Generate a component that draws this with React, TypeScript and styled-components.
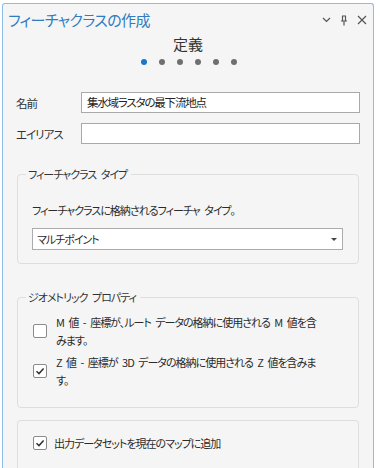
import React from "react";
import styled, { createGlobalStyle, css } from "styled-components";

const GlobalStyle = createGlobalStyle`
  html, body { margin: 0; padding: 0; background: #ffffff; }
  body {
    font-family: "Noto Sans CJK JP", "Noto Sans", sans-serif;
    font-feature-settings: "palt";
    color: #2b2b2b;
  }
  * { box-sizing: border-box; }
`;

const bodyText = css`
  font-size: 11px;
  letter-spacing: -1px;
  word-spacing: 3px;
  color: #2b2b2b;
`;

const Page = styled.div`
  width: 380px;
  height: 468px;
  padding: 3px 0 0 2px;
  overflow: hidden;
`;

const Panel = styled.div`
  width: 372px;
  height: 480px;
  background: #f5f5f5;
  border: 1px solid #8dbde6;
  border-bottom: none;
  border-radius: 3px 3px 0 0;
  display: flex;
  flex-direction: column;
  & > * { flex: none; }
`;

const Header = styled.div`
  height: 32px;
  display: flex;
  align-items: center;
  padding: 0 2px 0 5px;
`;

const Title = styled.div`
  flex: 1;
  font-size: 15px;
  letter-spacing: -0.6px;
  color: #2f7cc2;
  line-height: 20px;
`;

const IconBtn = styled.div`
  width: 18px;
  height: 18px;
  display: flex;
  align-items: center;
  justify-content: center;
`;

const StepTitle = styled.div`
  margin-top: -2px;
  text-align: center;
  font-size: 15px;
  line-height: 20px;
  color: #333;
`;

const Dots = styled.div`
  display: flex;
  justify-content: center;
  gap: 12px;
  margin-top: 5px;
  padding-left: 2px;
`;

const Dot = styled.span<{ $active?: boolean }>`
  width: 6px;
  height: 6px;
  border-radius: 50%;
  background: ${(p) => (p.$active ? "#1b75c9" : "#6f6f6f")};
`;

const Form = styled.div`
  display: flex;
  flex-direction: column;
  gap: 10px;
  margin-top: 27px;
  padding: 0 13px;
`;

const Row = styled.div`
  display: flex;
  align-items: center;
`;

const Label = styled.div`
  width: 65px;
  ${bodyText};
  font-size: 11.5px;
  color: #333;
`;

const TextBox = styled.div`
  flex: 1;
  height: 21px;
  background: #fff;
  border: 1px solid #a9a9a9;
  ${bodyText};
  font-size: 11.5px;
  letter-spacing: -1.2px;
  line-height: 19px;
  padding-left: 5px;
  color: #222;
`;

const Group = styled.fieldset<{ $top: number }>`
  margin: ${(p) => p.$top}px 14px 0 14px;
  border: 1px solid #dedede;
  border-radius: 4px;
  padding: 0 14px;
  min-width: 0;
`;

const Legend = styled.legend`
  ${bodyText};
  line-height: 16px;
  color: #333;
  padding: 0 4px 0 2px;
  margin-left: -6px;
`;

const Desc = styled.div`
  ${bodyText};
  line-height: 18px;
  margin-top: 19px;
`;

const Select = styled.div`
  margin: 9px 1px 13px 0;
  height: 22px;
  background: #fff;
  border: 1px solid #acacac;
  display: flex;
  align-items: center;
  justify-content: space-between;
  padding: 0 5px 0 4px;
  ${bodyText};
`;

const Caret = styled.span`
  width: 0;
  height: 0;
  border-left: 3px solid transparent;
  border-right: 3px solid transparent;
  border-top: 3px solid #444;
  margin-top: 1px;
`;

const CheckList = styled.div<{ $pt: number; $pb: number }>`
  display: flex;
  flex-direction: column;
  gap: 4px;
  padding: ${(p) => p.$pt}px 0 ${(p) => p.$pb}px 1px;
`;

const CheckRow = styled.div<{ $gap: number }>`
  display: flex;
  align-items: center;
  gap: ${(p) => p.$gap}px;
`;

const Box = styled.span`
  flex: none;
  width: 14px;
  height: 14px;
  background: #fff;
  border: 1px solid #8c8c8c;
  border-radius: 2px;
  display: flex;
  align-items: center;
  justify-content: center;
`;

const CheckText = styled.div`
  ${bodyText};
  line-height: 18px;
`;

const Plain = styled.div`
  margin: 12px 14px 0 14px;
  border: 1px solid #dedede;
  border-radius: 4px;
  padding: 0 14px 30px 14px;
`;

const Check = ({ on }: { on?: boolean }) => (
  <Box>
    {on && (
      <svg width="10" height="10" viewBox="0 0 10 10">
        <polyline points="1.5,5.2 4,7.6 8.6,2.4" fill="none" stroke="#333" strokeWidth="1.5" />
      </svg>
    )}
  </Box>
);

export default function App() {
  return (
    <>
      <GlobalStyle />
      <Page>
        <Panel>
          <Header>
            <Title>フィーチャクラスの作成</Title>
            <IconBtn>
              <svg width="9" height="6" viewBox="0 0 9 6">
                <polyline points="1,1 4.5,4.5 8,1" fill="none" stroke="#555" strokeWidth="1.2" />
              </svg>
            </IconBtn>
            <IconBtn>
              <svg width="8" height="11" viewBox="0 0 8 11">
                <path d="M2 1h4M2.5 1v5M5.5 1v5M1 6h6M4 6v4.5" fill="none" stroke="#555" strokeWidth="1.2" />
              </svg>
            </IconBtn>
            <IconBtn>
              <svg width="10" height="10" viewBox="0 0 10 10">
                <path d="M1 1L9 9M9 1L1 9" fill="none" stroke="#555" strokeWidth="1.2" />
              </svg>
            </IconBtn>
          </Header>
          <StepTitle>定義</StepTitle>
          <Dots>
            <Dot $active />
            <Dot />
            <Dot />
            <Dot />
            <Dot />
            <Dot />
          </Dots>
          <Form>
            <Row>
              <Label>名前</Label>
              <TextBox>集水域ラスタの最下流地点</TextBox>
            </Row>
            <Row>
              <Label>エイリアス</Label>
              <TextBox />
            </Row>
          </Form>
          <Group $top={22}>
            <Legend>フィーチャクラス タイプ</Legend>
            <Desc>フィーチャクラスに格納されるフィーチャ タイプ。</Desc>
            <Select>
              <span>マルチポイント</span>
              <Caret />
            </Select>
          </Group>
          <Group $top={25}>
            <Legend>ジオメトリック プロパティ</Legend>
            <CheckList $pt={8} $pb={18}>
              <CheckRow $gap={9}>
                <Check />
                <CheckText>
                  M 値 - 座標が、ルート データの格納に使用される M 値を含<br />みます。
                </CheckText>
              </CheckRow>
              <CheckRow $gap={9}>
                <Check on />
                <CheckText>
                  Z 値 - 座標が 3D データの格納に使用される Z 値を含みま<br />す。
                </CheckText>
              </CheckRow>
            </CheckList>
          </Group>
          <Plain>
            <CheckList $pt={13} $pb={0}>
              <CheckRow $gap={7}>
                <Check on />
                <CheckText>出力データセットを現在のマップに追加</CheckText>
              </CheckRow>
            </CheckList>
          </Plain>
        </Panel>
      </Page>
    </>
  );
}
